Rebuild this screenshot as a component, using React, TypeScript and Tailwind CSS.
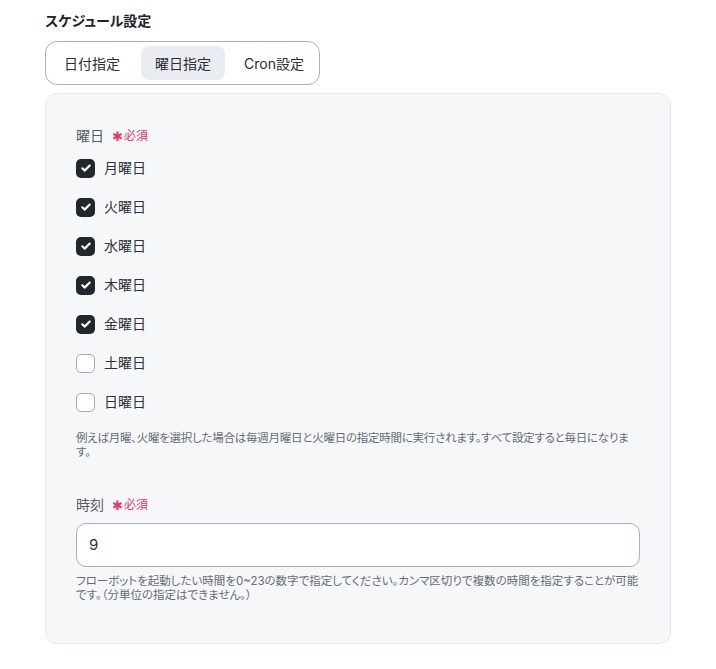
import React from "react";

const font = { fontFamily: '"Inter", "Noto Sans CJK JP", sans-serif' };

function Check({ checked, label }: { checked: boolean; label: string }) {
  return (
    <label className="flex items-center gap-[9px] h-5">
      {checked ? (
        <span className="flex h-[19px] w-[19px] items-center justify-center rounded-[5px] bg-[#22262d]">
          <svg width="12" height="12" viewBox="0 0 12 12" fill="none">
            <path d="M2.3 6.3 L4.8 8.6 L9.7 3.6" stroke="white" strokeWidth="2.2" strokeLinecap="round" strokeLinejoin="round" />
          </svg>
        </span>
      ) : (
        <span className="h-[19px] w-[19px] rounded-[5px] border border-[#a3aab6] bg-white" />
      )}
      <span className="text-[14px] text-[#2f3338] leading-5">{label}</span>
    </label>
  );
}

function Req() {
  return (
    <span className="ml-[8px] inline-flex items-center text-[#e8386e] text-[12px] leading-5">
      <span className="text-[13px] mr-[1px]">✱</span>必須
    </span>
  );
}

export default function App() {
  const days: [string, boolean][] = [
    ["月曜日", true],
    ["火曜日", true],
    ["水曜日", true],
    ["木曜日", true],
    ["金曜日", true],
    ["土曜日", false],
    ["日曜日", false],
  ];
  return (
    <div className="min-h-[669px] w-[716px] bg-white pl-[45px] pt-[11px] [font-feature-settings:'palt']" style={font}>
      <div className="text-[14px] font-bold text-[#1f2328] leading-5">スケジュール設定</div>
      <div className="mt-[10px] inline-flex h-[44px] w-[275px] items-center gap-[7px] rounded-[12px] border border-[#a9b0bb] bg-white pl-[4px]">
        <div className="flex h-[34px] items-center justify-center px-[14px] text-[14px] text-[#2a2e33]">日付指定</div>
        <div className="flex h-[34px] items-center justify-center rounded-[8px] bg-[#e9ecf0] px-[14px] text-[14px] text-[#2a2e33]">曜日指定</div>
        <div className="flex h-[34px] items-center justify-center px-[12px] text-[14px] text-[#2a2e33]">Cron設定</div>
      </div>
      <div className="mt-[8px] w-[626px] rounded-[12px] border border-[#e6e9ed] bg-[#f6f7f9] px-[30px] pt-[32px] pb-[41px]">
        <div className="flex items-center text-[14px] leading-5 text-[#545b66]">
          曜日<Req />
        </div>
        <div className="mt-[12px] flex flex-col gap-[19px]">
          {days.map(([d, c]) => (
            <Check key={d} checked={c} label={d} />
          ))}
        </div>
        <p className="mt-[19px] text-[11.5px] leading-[14px] tracking-[-0.25px] text-[#656c77]">
          例えば月曜、火曜を選択した場合は毎週月曜日と火曜日の指定時間に実行されます。すべて設定すると毎日になります。
        </p>
        <div className="mt-[36px] flex items-center text-[14px] leading-5 text-[#545b66]">
          時刻<Req />
        </div>
        <div className="mt-[8px] flex h-[44px] items-center rounded-[10px] border border-[#a9b0bb] bg-white px-[12px] text-[15px] text-[#2a2e33]">
          9
        </div>
        <p className="mt-[7px] text-[11.5px] leading-[14px] text-[#656c77]">
          フローボットを起動したい時間を0~23の数字で指定してください。カンマ区切りで複数の時間を指定することが可能です。（分単位の指定はできません。）
        </p>
      </div>
    </div>
  );
}
